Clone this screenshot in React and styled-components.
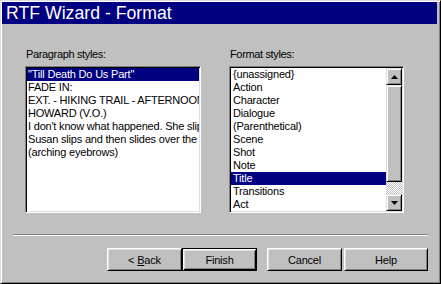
import React from "react";
import styled, { createGlobalStyle } from "styled-components";

const Global = createGlobalStyle`
  html, body { margin: 0; padding: 0; background: #c0c0c0; }
  body { font-family: "Liberation Sans", Arial, sans-serif; }
`;

const Window = styled.div`
  width: 441px;
  height: 284px;
  box-sizing: border-box;
  background: #c0c0c0;
  border: 1px solid;
  border-color: #dfdfdf #000 #000 #dfdfdf;
  box-shadow: inset 1px 1px #fff, inset -1px -1px #808080;
  padding: 1px;
  display: flex;
  flex-direction: column;
  overflow: hidden;
`;

const TitleBar = styled.div`
  height: 22px;
  margin-right: 2px;
  background: #000080;
  color: #fff;
  font-size: 17.7px;
  line-height: 22px;
  padding-left: 4px;
  white-space: nowrap;
`;

const Panels = styled.div`
  display: flex;
  padding: 24px 0 0 23px;
  gap: 28px;
`;

const Column = styled.div`
  width: ${(p) => p.$w}px;
  display: flex;
  flex-direction: column;
`;

const Label = styled.div`
  font-size: 11px;
  line-height: 13px;
  letter-spacing: -0.35px;
  color: #000;
  margin-left: 1px;
  margin-bottom: 5px;
  white-space: nowrap;
`;

const ListBox = styled.div`
  height: 147px;
  box-sizing: border-box;
  background: #fff;
  border: 1px solid;
  border-color: #808080 #fff #fff #808080;
  box-shadow: inset 1px 1px #000, inset -1px -1px #dfdfdf;
  padding: 1px;
  display: flex;
`;

const Items = styled.div`
  flex: 1;
  overflow: hidden;
  display: flex;
  flex-direction: column;
`;

const Item = styled.div`
  height: 13px;
  flex: none;
  font-size: 11px;
  line-height: 13px;
  letter-spacing: -0.2px;
  padding-left: ${(p) => p.$pad}px;
  white-space: nowrap;
  overflow: hidden;
  color: ${(p) => (p.$sel ? "#fff" : "#000")};
  background: ${(p) => (p.$sel ? "#000080" : "transparent")};
`;

const ScrollBar = styled.div`
  width: 16px;
  flex: none;
  display: flex;
  flex-direction: column;
`;

const Bevel = styled.div`
  box-sizing: border-box;
  background: #c0c0c0;
  border: 1px solid;
  border-color: #dfdfdf #000 #000 #dfdfdf;
  box-shadow: inset 1px 1px #fff, inset -1px -1px #808080;
  height: ${(p) => p.$h}px;
  flex: none;
  display: flex;
  align-items: center;
  justify-content: center;
`;

const Track = styled.div`
  height: ${(p) => p.$h}px;
  flex: none;
  background: repeating-conic-gradient(#c0c0c0 0 25%, #fff 0 50%) 0 0 / 2px 2px;
`;

const Separator = styled.div`
  margin: 21px 0 0 11px;
  width: 415px;
  height: 0;
  border-top: 1px solid #808080;
  border-bottom: 1px solid #fff;
`;

const ButtonRow = styled.div`
  display: flex;
  margin: 12px 0 0 105px;
`;

const Button = styled.div`
  width: ${(p) => p.$w}px;
  height: 23px;
  margin-left: ${(p) => p.$ml || 0}px;
  box-sizing: border-box;
  background: #c0c0c0;
  border: 1px solid;
  border-color: ${(p) => (p.$def ? "#000" : "#fff #000 #000 #fff")};
  box-shadow: ${(p) =>
    p.$def
      ? "inset 1px 1px #fff, inset -1px -1px #000, inset 2px 2px #dfdfdf, inset -2px -2px #808080"
      : "inset 1px 1px #dfdfdf, inset -1px -1px #808080"};
  display: flex;
  align-items: center;
  justify-content: center;
  font-size: 11px;
  letter-spacing: -0.2px;
  color: #000;
  white-space: pre;
`;

const U = styled.span`
  text-decoration: underline;
`;

const Arrow = ({ down }) => (
  <svg width="7" height="4" viewBox="0 0 7 4">
    {down ? (
      <polygon points="0,0 7,0 3.5,4" fill="#000" />
    ) : (
      <polygon points="3.5,0 7,4 0,4" fill="#000" />
    )}
  </svg>
);

const para = [
  "\"Till Death Do Us Part\"",
  "FADE IN:",
  "EXT. - HIKING TRAIL - AFTERNOON",
  "HOWARD (V.O.)",
  "I don't know what happened. She slipped",
  "Susan slips and then slides over the edge",
  "(arching eyebrows)",
];

const formats = [
  "{unassigned}",
  "Action",
  "Character",
  "Dialogue",
  "(Parenthetical)",
  "Scene",
  "Shot",
  "Note",
  "Title",
  "Transitions",
  "Act",
];

export default function App() {
  return (
    <>
      <Global />
      <Window>
        <TitleBar>RTF Wizard - Format</TitleBar>
        <Panels>
          <Column $w={176}>
            <Label>Paragraph styles:</Label>
            <ListBox>
              <Items>
                {para.map((t, i) => (
                  <Item key={i} $pad={1} $sel={i === 0}>
                    {t}
                  </Item>
                ))}
              </Items>
            </ListBox>
          </Column>
          <Column $w={175}>
            <Label>Format styles:</Label>
            <ListBox>
              <Items>
                {formats.map((t, i) => (
                  <Item key={i} $pad={2} $sel={t === "Title"}>
                    {t}
                  </Item>
                ))}
              </Items>
              <ScrollBar>
                <Bevel $h={17}>
                  <Arrow />
                </Bevel>
                <Bevel $h={97} />
                <Track $h={12} />
                <Bevel $h={17}>
                  <Arrow down />
                </Bevel>
              </ScrollBar>
            </ListBox>
          </Column>
        </Panels>
        <Separator />
        <ButtonRow>
          <Button $w={75}>
            {"< "}
            <U>B</U>ack
          </Button>
          <Button $w={75} $def>
            Finish
          </Button>
          <Button $w={75} $ml={10}>
            Cancel
          </Button>
          <Button $w={84} $ml={2}>
            Help
          </Button>
        </ButtonRow>
      </Window>
    </>
  );
}
